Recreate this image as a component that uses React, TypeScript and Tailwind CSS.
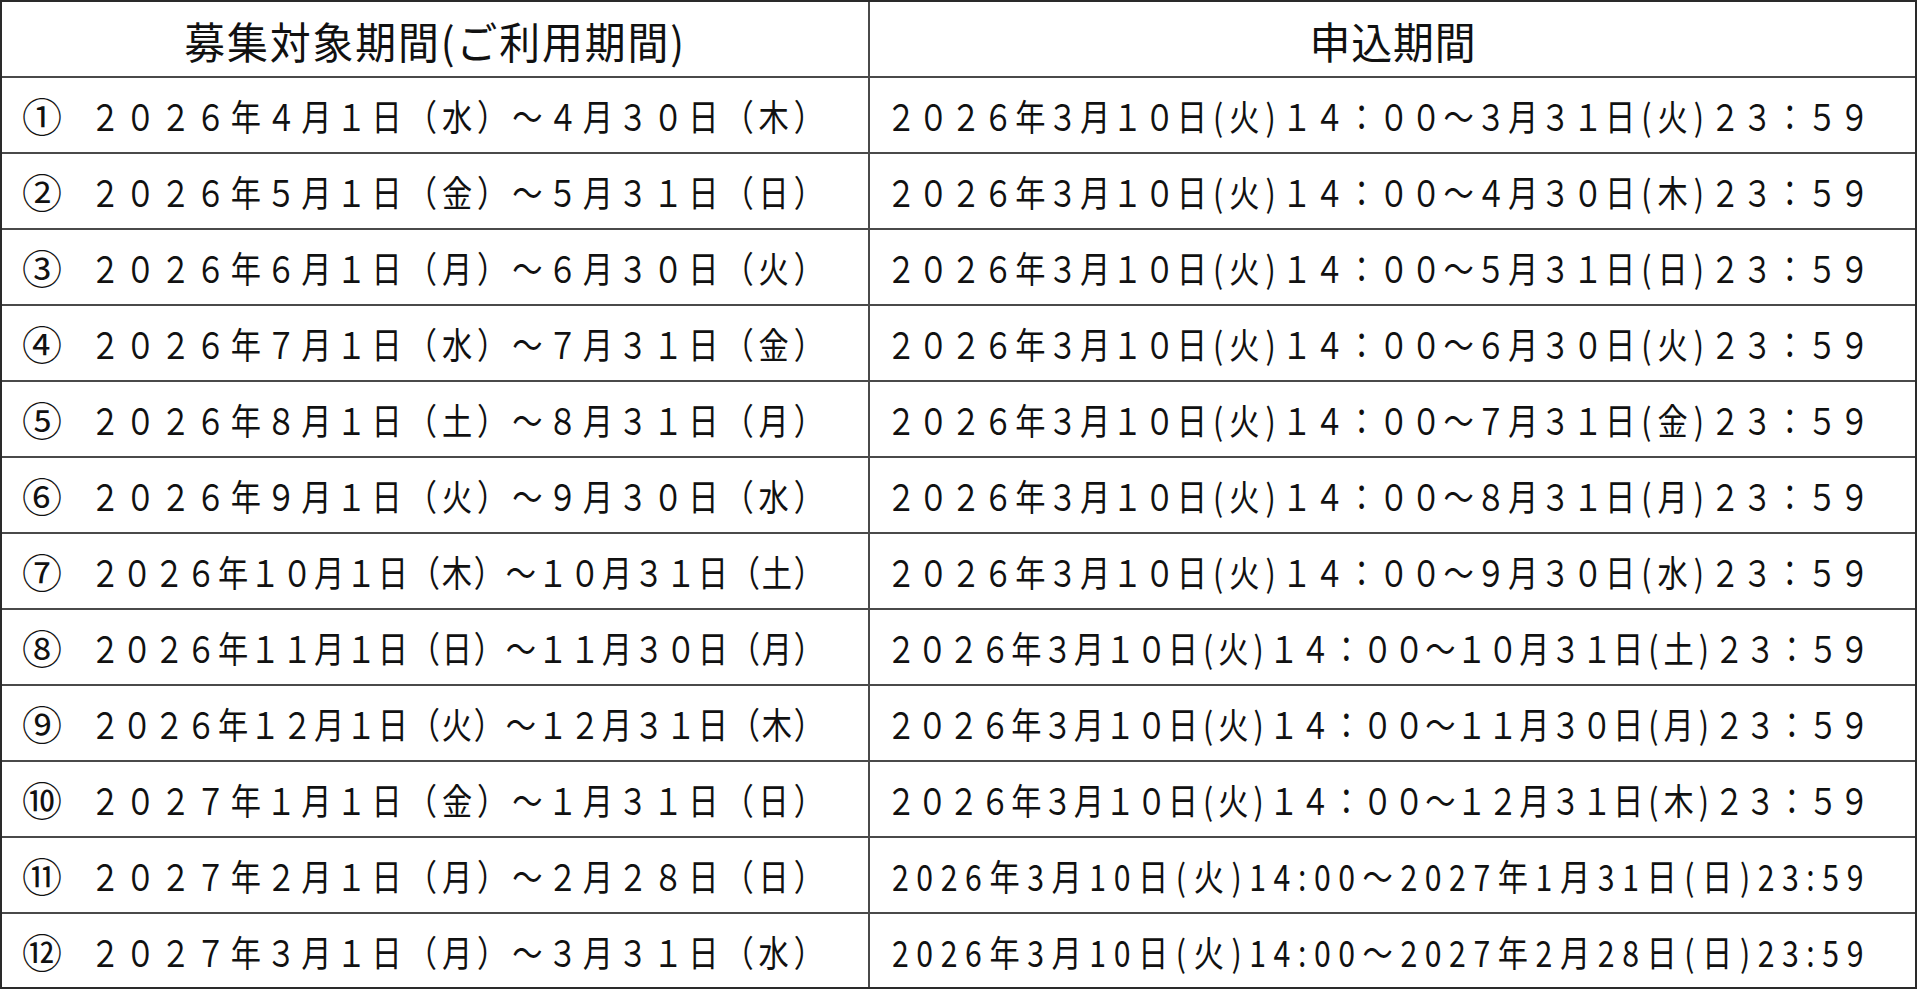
import React from 'react';

type Row = { no: string; period: string; apply: string; half?: boolean };

const ROWS: Row[] = [
  { no: '①', period: '２０２６年４月１日（水）～４月３０日（木）', apply: '２０２６年３月１０日(火)１４：００～３月３１日(火)２３：５９' },
  { no: '②', period: '２０２６年５月１日（金）～５月３１日（日）', apply: '２０２６年３月１０日(火)１４：００～４月３０日(木)２３：５９' },
  { no: '③', period: '２０２６年６月１日（月）～６月３０日（火）', apply: '２０２６年３月１０日(火)１４：００～５月３１日(日)２３：５９' },
  { no: '④', period: '２０２６年７月１日（水）～７月３１日（金）', apply: '２０２６年３月１０日(火)１４：００～６月３０日(火)２３：５９' },
  { no: '⑤', period: '２０２６年８月１日（土）～８月３１日（月）', apply: '２０２６年３月１０日(火)１４：００～７月３１日(金)２３：５９' },
  { no: '⑥', period: '２０２６年９月１日（火）～９月３０日（水）', apply: '２０２６年３月１０日(火)１４：００～８月３１日(月)２３：５９' },
  { no: '⑦', period: '２０２６年１０月１日（木）～１０月３１日（土）', apply: '２０２６年３月１０日(火)１４：００～９月３０日(水)２３：５９' },
  { no: '⑧', period: '２０２６年１１月１日（日）～１１月３０日（月）', apply: '２０２６年３月１０日(火)１４：００～１０月３１日(土)２３：５９' },
  { no: '⑨', period: '２０２６年１２月１日（火）～１２月３１日（木）', apply: '２０２６年３月１０日(火)１４：００～１１月３０日(月)２３：５９' },
  { no: '⑩', period: '２０２７年１月１日（金）～１月３１日（日）', apply: '２０２６年３月１０日(火)１４：００～１２月３１日(木)２３：５９' },
  { no: '⑪', period: '２０２７年２月１日（月）～２月２８日（日）', apply: '2026年3月10日(火)14:00～2027年1月31日(日)23:59', half: true },
  { no: '⑫', period: '２０２７年３月１日（月）～３月３１日（水）', apply: '2026年3月10日(火)14:00～2027年2月28日(日)23:59', half: true },
];

// 均等割り付け: every glyph in its own box, spread edge to edge
function Spread({ text, className, wideParens }: { text: string; className: string; wideParens?: boolean }) {
  return (
    <div className={`flex shrink-0 justify-between origin-left leading-none ${className}`}>
      {Array.from(text).map((c, i) =>
        wideParens && (c === '(' || c === ')') ? (
          <span key={i} className="inline-block w-[0.6em] text-center">{c}</span>
        ) : (
          <span key={i}>{c}</span>
        ),
      )}
    </div>
  );
}

export default function App() {
  return (
    <div className="min-h-[990px] bg-white font-['Noto_Sans_CJK_JP',sans-serif] text-[#111]">
      <div className="grid w-[1917px] grid-cols-[866px_1045px] grid-rows-[repeat(12,74px)_73px] gap-[2px] border-2 border-[#2a2a2a] bg-[#4a4a4a]">
        <div className="flex items-center justify-center bg-white pt-[3px]">
          <span className="inline-block scale-x-[0.95] text-[43px] leading-none tracking-[2px]">募集対象期間(ご利用期間)</span>
        </div>
        <div className="flex items-center justify-center bg-white pt-[3px]">
          <span className="inline-block scale-x-[0.95] text-[43px] leading-none tracking-[1px]">申込期間</span>
        </div>

        {ROWS.map((r) => (
          <React.Fragment key={r.no}>
            <div className="flex items-center bg-white pl-[20px]">
              <span className="w-[68px] shrink-0 text-[40px] leading-none">{r.no}</span>
              <Spread text={r.period} className="w-[874px] scale-x-[0.84] text-[36px]" />
            </div>
            {r.half ? (
              <div className="flex items-center bg-white pl-[22px]">
                <Spread text={r.apply} className="w-[1157px] scale-x-[0.84] text-[36px]" />
              </div>
            ) : (
              <div className="flex items-center bg-white pl-[16px]">
                <Spread text={r.apply} className="w-[1171px] scale-x-[0.84] text-[36px]" wideParens />
              </div>
            )}
          </React.Fragment>
        ))}
      </div>
    </div>
  );
}
